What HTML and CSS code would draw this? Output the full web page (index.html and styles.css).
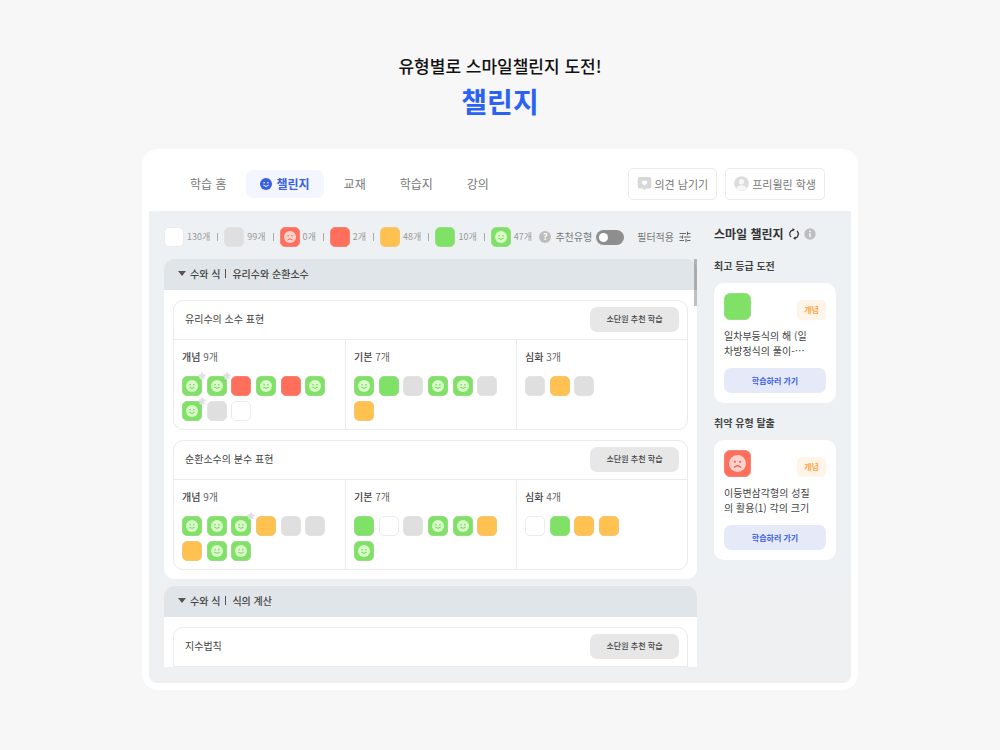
FILE: index.html
```html
<!DOCTYPE html>
<html lang="ko">
<head>
    <meta charset="UTF-8">
    <meta name="viewport" content="width=device-width, initial-scale=1.0">
    <title>챌린지</title>
    <link rel="stylesheet" href="styles.css">
</head>
<body>
    <!-- shared icons -->
    <svg class="sprite" aria-hidden="true">
        <symbol id="smile" viewBox="0 0 12 12">
            <circle class="face" cx="6" cy="6" r="6"/>
            <circle class="mark" cx="4.1" cy="4.8" r="0.8"/>
            <circle class="mark" cx="7.9" cy="4.8" r="0.8"/>
            <path class="mouth" d="M3.6 7.4Q6 9.6 8.4 7.4"/>
        </symbol>
        <symbol id="sad" viewBox="0 0 12 12">
            <circle class="face" cx="6" cy="6" r="6"/>
            <circle class="mark" cx="4.1" cy="4.8" r="0.8"/>
            <circle class="mark" cx="7.9" cy="4.8" r="0.8"/>
            <path class="mouth" d="M3.8 8.7Q6 6.6 8.2 8.7"/>
        </symbol>
        <symbol id="star" viewBox="0 0 8 8">
            <path d="M4 0.8L5 2.7L7.2 3L5.6 4.5L6 6.8L4 5.7L2 6.8L2.4 4.5L0.8 3L3 2.7Z" fill="#e0e0e3" stroke="#e0e0e3" stroke-width="1.2" stroke-linejoin="round"/>
        </symbol>
    </svg>

    <header class="intro">
        <p>유형별로 스마일챌린지 도전!</p>
        <h1>챌린지</h1>
    </header>

    <div class="app">
        <div class="topbar">
            <nav class="tabs">
                <a href="#">학습 홈</a>
                <a href="#" class="active"><svg class="icon"><use href="#smile"/></svg>챌린지</a>
                <a href="#">교재</a>
                <a href="#">학습지</a>
                <a href="#">강의</a>
            </nav>
            <div class="actions">
                <button type="button">
                    <svg width="15" height="15" viewBox="0 0 14 14"><path d="M2.5 1h9A1.8 1.8 0 0 1 13.3 2.8v7a1.8 1.8 0 0 1-1.8 1.8H8.6L7 13.2L5.4 11.6H2.5A1.8 1.8 0 0 1 .7 9.8v-7A1.8 1.8 0 0 1 2.5 1z" fill="#d8d8d8"/><path d="M7 9L4.7 6.7A1.4 1.4 0 0 1 7 4.8A1.4 1.4 0 0 1 9.3 6.7z" fill="#fff"/></svg>
                    의견 남기기
                </button>
                <button type="button">
                    <svg width="15" height="15" viewBox="0 0 16 16"><circle cx="8" cy="8" r="7.8" fill="#dcdcdc"/><circle cx="8" cy="6.2" r="2.9" fill="#f7f7f7"/><path d="M2.7 13.3C3.2 10.8 5.5 9.9 8 9.9s4.8.9 5.3 3.4A7.5 7.5 0 0 1 2.7 13.3z" fill="#f7f7f7"/></svg>
                    프리윌린 학생
                </button>
            </div>
        </div>

        <div class="workspace">
            <main class="board">
                <div class="toolbar">
                    <ul class="legend">
                        <li><span class="tile"></span>130개</li>
                        <li><span class="tile gray"></span>99개</li>
                        <li><span class="tile red"><svg><use href="#sad"/></svg></span>0개</li>
                        <li><span class="tile red"></span>2개</li>
                        <li><span class="tile yellow"></span>48개</li>
                        <li><span class="tile green"></span>10개</li>
                        <li><span class="tile green"><svg><use href="#smile"/></svg></span>47개</li>
                    </ul>
                    <div class="filters">
                        <span class="help">?</span>
                        <label for="recommend">추천유형</label>
                        <input type="checkbox" id="recommend" class="toggle">
                        <button type="button" class="filter-btn">
                            필터적용
                            <svg width="12" height="12" viewBox="0 0 12 12"><path d="M.5 2.5H7M9 2.5h2.5M8.5 .8v3.4M.5 6H3M5 6h6.5M3.5 4.3v3.4M.5 9.5H5M8 9.5h3.5M7 7.8v3.4" fill="none" stroke="#666" stroke-width="1.1"/></svg>
                        </button>
                    </div>
                </div>

                <div class="scroll-area">
                    <div class="unit-list">
                        <section class="unit">
                            <button type="button" class="unit-head"><i class="caret"></i>수와 식<i class="bar"></i>유리수와 순환소수</button>
                            <div class="unit-body">
                                <article class="topic">
                                    <div class="topic-head">
                                        <h2>유리수의 소수 표현</h2>
                                        <button type="button">소단원 추천 학습</button>
                                    </div>
                                    <div class="levels">
                                        <div class="level">
                                            <h3>개념 <span>9개</span></h3>
                                            <div class="tiles">
                                                <span class="tile green"><svg><use href="#smile"/></svg><svg class="star"><use href="#star"/></svg></span>
                                                <span class="tile green"><svg><use href="#smile"/></svg><svg class="star"><use href="#star"/></svg></span>
                                                <span class="tile red"></span>
                                                <span class="tile green"><svg><use href="#smile"/></svg></span>
                                                <span class="tile red"></span>
                                                <span class="tile green"><svg><use href="#smile"/></svg></span>
                                                <span class="tile green"><svg><use href="#smile"/></svg><svg class="star"><use href="#star"/></svg></span>
                                                <span class="tile gray"></span>
                                                <span class="tile"></span>
                                            </div>
                                        </div>
                                        <div class="level">
                                            <h3>기본 <span>7개</span></h3>
                                            <div class="tiles">
                                                <span class="tile green"><svg><use href="#smile"/></svg></span>
                                                <span class="tile green"></span>
                                                <span class="tile gray"></span>
                                                <span class="tile green"><svg><use href="#smile"/></svg></span>
                                                <span class="tile green"><svg><use href="#smile"/></svg></span>
                                                <span class="tile gray"></span>
                                                <span class="tile yellow"></span>
                                            </div>
                                        </div>
                                        <div class="level">
                                            <h3>심화 <span>3개</span></h3>
                                            <div class="tiles">
                                                <span class="tile gray"></span>
                                                <span class="tile yellow"></span>
                                                <span class="tile gray"></span>
                                            </div>
                                        </div>
                                    </div>
                                </article>

                                <article class="topic">
                                    <div class="topic-head">
                                        <h2>순환소수의 분수 표현</h2>
                                        <button type="button">소단원 추천 학습</button>
                                    </div>
                                    <div class="levels">
                                        <div class="level">
                                            <h3>개념 <span>9개</span></h3>
                                            <div class="tiles">
                                                <span class="tile green"><svg><use href="#smile"/></svg></span>
                                                <span class="tile green"><svg><use href="#smile"/></svg></span>
                                                <span class="tile green"><svg><use href="#smile"/></svg><svg class="star"><use href="#star"/></svg></span>
                                                <span class="tile yellow"></span>
                                                <span class="tile gray"></span>
                                                <span class="tile gray"></span>
                                                <span class="tile yellow"></span>
                                                <span class="tile green"><svg><use href="#smile"/></svg></span>
                                                <span class="tile green"><svg><use href="#smile"/></svg></span>
                                            </div>
                                        </div>
                                        <div class="level">
                                            <h3>기본 <span>7개</span></h3>
                                            <div class="tiles">
                                                <span class="tile green"></span>
                                                <span class="tile"></span>
                                                <span class="tile gray"></span>
                                                <span class="tile green"><svg><use href="#smile"/></svg></span>
                                                <span class="tile green"><svg><use href="#smile"/></svg></span>
                                                <span class="tile yellow"></span>
                                                <span class="tile green"><svg><use href="#smile"/></svg></span>
                                            </div>
                                        </div>
                                        <div class="level">
                                            <h3>심화 <span>4개</span></h3>
                                            <div class="tiles">
                                                <span class="tile"></span>
                                                <span class="tile green"></span>
                                                <span class="tile yellow"></span>
                                                <span class="tile yellow"></span>
                                            </div>
                                        </div>
                                    </div>
                                </article>
                            </div>
                        </section>

                        <section class="unit">
                            <button type="button" class="unit-head"><i class="caret"></i>수와 식<i class="bar"></i>식의 계산</button>
                            <div class="unit-body">
                                <article class="topic">
                                    <div class="topic-head">
                                        <h2>지수법칙</h2>
                                        <button type="button">소단원 추천 학습</button>
                                    </div>
                                    <div class="levels"></div>
                                </article>
                            </div>
                        </section>
                    </div>
                    <div class="scroll-thumb"></div>
                </div>
            </main>

            <aside class="side">
                <h2 class="side-title">
                    스마일 챌린지
                    <svg width="12" height="12" viewBox="0 0 12 12"><path d="M5 1.8A4.3 4.3 0 0 0 3 9.1M7 10.2A4.3 4.3 0 0 0 9 2.9" fill="none" stroke="#333" stroke-width="1.3"/><path d="M4.6 0L6.9 1.8L4.6 3.6zM7.4 8.4v3.6L5.1 10.2z" fill="#333"/></svg>
                    <svg width="12" height="12" viewBox="0 0 12 12"><circle cx="6" cy="6" r="5.7" fill="#bdbdbd"/><circle cx="6" cy="3.4" r=".8" fill="#fff"/><path d="M6 5.2v4" stroke="#fff" stroke-width="1.3"/></svg>
                </h2>

                <h3>최고 등급 도전</h3>
                <div class="card">
                    <div class="card-top">
                        <span class="tile large green"></span>
                        <span class="badge">개념</span>
                    </div>
                    <p>일차부등식의 해 (일차방정식의 풀이-⋯</p>
                    <button type="button">학습하러 가기</button>
                </div>

                <h3>취약 유형 탈출</h3>
                <div class="card">
                    <div class="card-top">
                        <span class="tile large red"><svg><use href="#sad"/></svg></span>
                        <span class="badge">개념</span>
                    </div>
                    <p>이등변삼각형의 성질의 활용(1) 각의 크기</p>
                    <button type="button">학습하러 가기</button>
                </div>
            </aside>
        </div>
    </div>
</body>
</html>
```
FILE: styles.css
```css
* {
    box-sizing: border-box;
}
body {
    margin: 0;
    padding: 52px 142px 60px;
    background-color: #f7f7f7;
    font-family: "Noto Sans CJK KR", sans-serif;
    font-size: 10px;
    line-height: 14px;
    color: #444;
}
h1, h2, h3, p, ul {
    margin: 0;
    padding: 0;
}
button {
    border: none;
    padding: 0;
    background: none;
    font-family: inherit;
    color: inherit;
    cursor: pointer;
}
svg {
    display: block;
    flex: none;
}
.sprite {
    position: absolute;
    width: 0;
    height: 0;
}

/* face icons take their colours from the element that uses them */
.face {
    fill: var(--face);
}
.mark {
    fill: var(--mark);
}
.mouth {
    fill: none;
    stroke: var(--mark);
    stroke-width: 1;
    stroke-linecap: round;
}

/* heading above the app */
.intro {
    text-align: center;
    margin-bottom: 27px;
}
.intro p {
    font-size: 17px;
    line-height: 28px;
    font-weight: 500;
    color: #111;
}
.intro h1 {
    font-size: 28px;
    line-height: 42px;
    font-weight: bold;
    color: #2b62f2;
}

.app {
    background: white;
    border-radius: 16px;
    padding: 0 7px 7px;
}

/* top bar */
.topbar {
    display: flex;
    justify-content: space-between;
    align-items: center;
    height: 62px;
    padding: 7px 26px 0 27px;
}
.tabs {
    display: flex;
    gap: 6px;
}
.tabs a {
    display: flex;
    align-items: center;
    gap: 4px;
    height: 28px;
    padding: 0 14px;
    border-radius: 7px;
    font-size: 12px;
    color: #777;
    text-decoration: none;
}
.tabs a.active {
    background-color: #f3f6ff;
    font-weight: bold;
    color: #3a5fe2;
    --face: #3a5fe2;
    --mark: white;
}
.tabs .icon {
    width: 12px;
    height: 12px;
}
.actions {
    display: flex;
    gap: 8px;
}
.actions button {
    display: flex;
    align-items: center;
    gap: 3px;
    height: 32px;
    padding: 0 8px;
    border: 1px solid #ebebeb;
    border-radius: 5px;
    font-size: 11px;
    color: #777;
}

/* work area */
.workspace {
    display: flex;
    gap: 17px;
    padding: 16px 15px;
    border-radius: 0 0 8px 8px;
    background: linear-gradient(#edf1f4 369px, #eff0f2 369px);
}
.board {
    flex: 1;
    min-width: 0;
}
.toolbar {
    display: flex;
    justify-content: space-between;
    align-items: center;
    height: 20px;
    margin-bottom: 12px;
    padding-right: 6px;
}
.legend {
    display: flex;
    list-style: none;
}
.legend li {
    display: flex;
    align-items: center;
    gap: 3px;
    font-size: 9px;
    color: #999;
}
.legend li + li::before {
    content: "";
    width: 1px;
    height: 8px;
    margin: 0 3px 0 7px;
    background-color: #aaa;
}
.filters {
    display: flex;
    align-items: center;
    gap: 4px;
    color: #777;
}
.help {
    width: 12px;
    height: 12px;
    border-radius: 50%;
    background-color: #bdbdbd;
    color: white;
    font-size: 9px;
    line-height: 12px;
    font-weight: bold;
    text-align: center;
}
.toggle {
    appearance: none;
    width: 28px;
    height: 15px;
    margin: 0;
    padding: 3px;
    border-radius: 8px;
    background-color: #8e8e8e;
    cursor: pointer;
}
.toggle::before {
    content: "";
    display: block;
    width: 9px;
    height: 9px;
    border-radius: 50%;
    background-color: white;
}
.toggle:checked {
    background-color: #3a5fe2;
}
.toggle:checked::before {
    margin-left: auto;
}
.filter-btn {
    display: flex;
    align-items: center;
    gap: 5px;
    margin-left: 9px;
    font-size: 10px;
    line-height: 14px;
}

/* tiles */
.tile {
    position: relative;
    display: flex;
    align-items: center;
    justify-content: center;
    width: 20px;
    height: 20px;
    border: 1px solid #ebebeb;
    border-radius: 5px;
    background-color: white;
}
.tile svg {
    width: 12px;
    height: 12px;
}
.tile .star {
    position: absolute;
    top: -5px;
    right: -5px;
    width: 8px;
    height: 8px;
}
.tile.large {
    width: 27px;
    height: 27px;
    border-radius: 6px;
}
.tile.large svg {
    width: 17px;
    height: 17px;
}
.gray {
    background-color: #dfdfdf;
    border-color: #e3e3e3;
}
.red {
    background-color: #ff6f5b;
    border-color: #f58476;
    --face: #ffd3cc;
    --mark: #f9614d;
}
.yellow {
    background-color: #ffc14f;
    border-color: #f3c674;
}
.green {
    background-color: #7fe165;
    border-color: #98dd86;
    --face: #d9fbc9;
    --mark: #6fd455;
}

/* unit list */
.scroll-area {
    position: relative;
}
.unit-list {
    display: flex;
    flex-direction: column;
    gap: 7px;
    max-height: 408px;
    overflow: hidden;
}
.scroll-thumb {
    position: absolute;
    top: 0;
    right: 0;
    width: 3px;
    height: 47px;
    background-color: rgba(0, 0, 0, 0.25);
}
.unit {
    flex: none;
}
.unit-head {
    display: flex;
    align-items: center;
    width: 100%;
    height: 31px;
    padding: 0 14px 2px;
    border-radius: 10px 10px 0 0;
    background-color: #e0e5e9;
    font-size: 10px;
    font-weight: 500;
    color: #444;
}
.caret {
    margin-right: 4px;
    border: 4px solid transparent;
    border-top: 5px solid #555;
    border-bottom: none;
}
.bar {
    width: 1px;
    height: 9px;
    margin: 0 6px 0 5px;
    background-color: #555;
}
.unit-body {
    display: flex;
    flex-direction: column;
    gap: 10px;
    padding: 10px 9px 9px;
    border-radius: 0 0 10px 10px;
    background-color: white;
}
.topic {
    border: 1px solid #ebebeb;
    border-radius: 10px;
}
.topic-head {
    display: flex;
    justify-content: space-between;
    align-items: center;
    height: 39px;
    padding: 0 8px 2px 11px;
    border-bottom: 1px solid #ebebeb;
}
.topic-head h2 {
    font-size: 10px;
    font-weight: normal;
}
.topic-head button {
    width: 89px;
    height: 25px;
    padding-bottom: 1px;
    border-radius: 7px;
    background-color: #e7e7e7;
    font-size: 8px;
    font-weight: 500;
}
.levels {
    display: grid;
    grid-template-columns: repeat(3, 1fr);
    min-height: 20px;
}
.level {
    padding: 10px 8px 8px;
}
.level + .level {
    border-left: 1px solid #ebebeb;
}
.level h3 {
    margin-bottom: 12px;
    font-size: 10px;
    font-weight: 500;
}
.level h3 span {
    font-weight: normal;
    color: #666;
}
.tiles {
    display: grid;
    grid-template-columns: repeat(6, 1fr);
    row-gap: 5px;
    max-width: 148px;
}

/* side column */
.side {
    width: 122px;
}
.side-title {
    display: flex;
    align-items: center;
    gap: 4px;
    height: 14px;
    font-size: 12px;
    font-weight: bold;
    color: #333;
}
.side h3 {
    margin: 18px 0 10px;
    font-size: 10px;
    font-weight: bold;
    color: #444;
}
.side .card + h3 {
    margin-top: 13px;
}
.card {
    padding: 10px;
    border-radius: 10px;
    background-color: white;
}
.card-top {
    display: flex;
    justify-content: space-between;
    align-items: flex-end;
}
.badge {
    width: 29px;
    border-radius: 5px;
    background-color: #fff4e8;
    font-size: 8px;
    line-height: 20px;
    font-weight: bold;
    text-align: center;
    color: #ffa548;
}
.card p {
    margin: 8px 0 10px;
    padding-right: 12px;
    line-height: 15px;
    word-break: break-all;
}
.card button {
    width: 100%;
    height: 25px;
    border-radius: 7px;
    background-color: #e6e9f8;
    font-size: 8px;
    font-weight: bold;
    color: #3a5fe2;
}
```
